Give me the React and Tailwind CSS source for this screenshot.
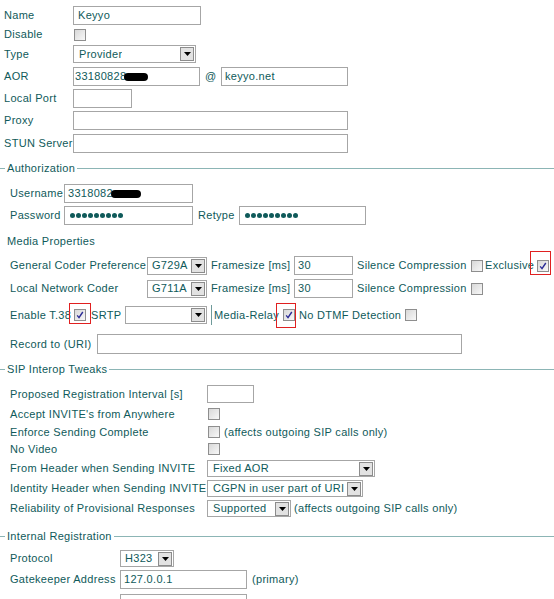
import React from 'react';

// colours taken from the old admin form
const TEXT = 'text-[#0f5a5a]';

const Box = ({ className = '', children }) => (
  <div className={`flex shrink-0 items-center overflow-hidden whitespace-nowrap border border-[#a6a6a6] bg-white ${className}`}>
    {children}
  </div>
);

const Arrow = () => (
  <span className="flex h-[14px] w-[14px] shrink-0 items-center justify-center border border-[#8c8c8c] bg-[#e2e2e2]">
    <svg width="7" height="4" viewBox="0 0 7 4">
      <path d="M0 0h7L3.5 4z" fill="#000" />
    </svg>
  </span>
);

const Select = ({ className = '', value = '' }) => (
  <div className={`flex shrink-0 items-center justify-between border border-[#a6a6a6] bg-white pl-[4px] pr-[1px] whitespace-nowrap ${className}`}>
    <span className="overflow-hidden">{value}</span>
    <Arrow />
  </div>
);

const Check = ({ checked = false, className = '', children }) => (
  <span className={`relative flex h-[12px] w-[12px] shrink-0 items-center justify-center border border-[#8e8e8e] bg-gradient-to-br from-[#d8d8d8] to-[#f8f8f8] ${className}`}>
    {checked && (
      <svg width="8" height="8" viewBox="0 0 8 8">
        <path d="M1.2 4.4L3 6.6L6.8 1" fill="none" stroke="#2b2b96" strokeWidth="1.4" />
      </svg>
    )}
    {children}
  </span>
);

const Redacted = ({ className = '' }) => (
  <span className={`inline-block h-[8px] rounded-full bg-black ${className}`} />
);

const Dots = () => (
  <span className="flex items-center gap-[1px]">
    {Array.from({ length: 9 }).map((_, i) => (
      <span key={i} className="h-[5px] w-[5px] rounded-full bg-[#0f5a5a]" />
    ))}
  </span>
);

const Legend = ({ title, className = '' }) => (
  <div className={`flex h-[14px] items-center ${className}`}>
    <span className="h-px w-[5px] bg-[#8cb5b5]" />
    <span className="px-[2px]">{title}</span>
    <span className="h-px flex-1 bg-[#8cb5b5]" />
  </div>
);

const App = () => {
  return (
    <div className={`h-[599px] w-[554px] overflow-hidden bg-white pt-[6px] font-['Liberation_Sans',Arial,sans-serif] text-[11px] tracking-[0.3px] ${TEXT}`}>
      {/* General */}
      <div className="pl-[4px]">
        <div className="flex h-[19px] items-center">
          <span className="w-[69px]">Name</span>
          <Box className="h-[19px] w-[128px] pl-[4px]">Keyyo</Box>
        </div>
        <div className="mt-[3px] flex h-[13px] items-center">
          <span className="w-[70px]">Disable</span>
          <Check />
        </div>
        <div className="mt-[4px] flex h-[18px] items-center">
          <span className="w-[69px]">Type</span>
          <Select className="h-[18px] w-[123px] pl-[5px]" value="Provider" />
        </div>
        <div className="mt-[4px] flex h-[19px] items-center">
          <span className="w-[69px]">AOR</span>
          <Box className="h-[19px] w-[127px] pl-[1px]">
            33180828
            <Redacted className="-ml-[2px] w-[24px]" />
          </Box>
          <span className="ml-[5px] w-[16px]">@</span>
          <Box className="h-[19px] w-[127px] pl-[3px]">keyyo.net</Box>
        </div>
        <div className="mt-[3px] flex h-[19px] items-center">
          <span className="w-[69px]">Local Port</span>
          <Box className="h-[19px] w-[59px]" />
        </div>
        <div className="mt-[3px] flex h-[19px] items-center">
          <span className="w-[69px]">Proxy</span>
          <Box className="h-[19px] w-[275px]" />
        </div>
        <div className="mt-[4px] flex h-[19px] items-center">
          <span className="w-[69px] whitespace-nowrap">STUN Server</span>
          <Box className="h-[19px] w-[275px]" />
        </div>
      </div>

      {/* Authorization */}
      <Legend title="Authorization" className="mt-[8px]" />
      <div className="pl-[10px]">
        <div className="mt-[9px] flex h-[19px] items-center">
          <span className="w-[54px]">Username</span>
          <Box className="h-[19px] w-[129px] pl-[3px]">
            3318082
            <Redacted className="-ml-[2px] w-[30px]" />
          </Box>
        </div>
        <div className="mt-[3px] flex h-[19px] items-center">
          <span className="w-[54px]">Password</span>
          <Box className="h-[19px] w-[129px] pl-[5px]">
            <Dots />
          </Box>
          <span className="ml-[5px] w-[41px]">Retype</span>
          <Box className="h-[19px] w-[127px] pl-[5px]">
            <Dots />
          </Box>
        </div>
      </div>

      {/* Media */}
      <div className="mt-[9px] flex h-[14px] items-center pl-[7px]">Media Properties</div>
      <div className="pl-[10px]">
        <div className="mt-[8px] flex h-[19px] items-center whitespace-nowrap">
          <span className="w-[137px]">General Coder Preference</span>
          <Select className="h-[18px] w-[60px] pl-[3px]" value="G729A" />
          <span className="ml-[4px] w-[83px]">Framesize [ms]</span>
          <Box className="h-[19px] w-[59px] pl-[3px]">30</Box>
          <span className="ml-[4px] w-[114px]">Silence Compression</span>
          <Check />
          <span className="ml-[2px] w-[52px]">Exclusive</span>
          <Check checked>
            <span className="absolute -left-[8px] -top-[10px] h-[24px] w-[21px] border border-[#e02020]" />
          </Check>
        </div>
        <div className="mt-[4px] flex h-[19px] items-center whitespace-nowrap">
          <span className="w-[137px]">Local Network Coder</span>
          <Select className="h-[18px] w-[60px] pl-[3px]" value="G711A" />
          <span className="ml-[4px] w-[83px]">Framesize [ms]</span>
          <Box className="h-[19px] w-[59px] pl-[3px]">30</Box>
          <span className="ml-[4px] w-[114px]">Silence Compression</span>
          <Check />
        </div>
        <div className="mt-[7px] flex h-[20px] items-center whitespace-nowrap">
          <span className="w-[64px]">Enable T.38</span>
          <Check checked>
            <span className="absolute -left-[6px] -top-[7px] h-[21px] w-[22px] border border-[#e02020]" />
          </Check>
          <span className="ml-[5px] w-[34px]">SRTP</span>
          <Select className="h-[18px] w-[82px]" value="" />
          <span className="ml-[4px] h-[20px] w-px bg-[#6f9a9a]" />
          <span className="ml-[2px] w-[69px]">Media-Relay</span>
          <Check checked>
            <span className="absolute -left-[8px] -top-[7px] h-[25px] w-[20px] border border-[#e02020]" />
          </Check>
          <span className="ml-[4px] w-[106px]">No DTMF Detection</span>
          <Check />
        </div>
        <div className="mt-[9px] flex h-[20px] items-center">
          <span className="w-[87px] whitespace-nowrap">Record to (URI)</span>
          <Box className="h-[20px] w-[365px]" />
        </div>
      </div>

      {/* SIP Interop Tweaks */}
      <Legend title="SIP Interop Tweaks" className="mt-[8px]" />
      <div className="pl-[10px] whitespace-nowrap">
        <div className="mt-[9px] flex h-[18px] items-center">
          <span className="w-[197px]">Proposed Registration Interval [s]</span>
          <Box className="h-[18px] w-[47px]" />
        </div>
        <div className="mt-[5px] flex h-[12px] items-center">
          <span className="w-[198px]">Accept INVITE's from Anywhere</span>
          <Check />
        </div>
        <div className="mt-[6px] flex h-[12px] items-center">
          <span className="w-[198px]">Enforce Sending Complete</span>
          <Check />
          <span className="ml-[4px]">(affects outgoing SIP calls only)</span>
        </div>
        <div className="mt-[5px] flex h-[12px] items-center">
          <span className="w-[198px]">No Video</span>
          <Check />
        </div>
        <div className="mt-[5px] flex h-[17px] items-center">
          <span className="w-[197px]">From Header when Sending INVITE</span>
          <Select className="h-[17px] w-[168px] pl-[5px]" value="Fixed AOR" />
        </div>
        <div className="mt-[3px] flex h-[17px] items-center">
          <span className="w-[197px]">Identity Header when Sending INVITE</span>
          <Select className="h-[17px] w-[156px] pl-[5px]" value="CGPN in user part of URI" />
        </div>
        <div className="mt-[3px] flex h-[17px] items-center">
          <span className="w-[197px]">Reliability of Provisional Responses</span>
          <Select className="h-[17px] w-[84px] pl-[5px]" value="Supported" />
          <span className="ml-[3px]">(affects outgoing SIP calls only)</span>
        </div>
      </div>

      {/* Internal Registration */}
      <Legend title="Internal Registration" className="mt-[12px]" />
      <div className="pl-[10px] whitespace-nowrap">
        <div className="mt-[7px] flex h-[17px] items-center">
          <span className="w-[110px]">Protocol</span>
          <Select className="h-[17px] w-[54px] pl-[4px]" value="H323" />
        </div>
        <div className="mt-[3px] flex h-[19px] items-center">
          <span className="w-[110px]">Gatekeeper Address</span>
          <Box className="h-[19px] w-[127px] pl-[3px]">127.0.0.1</Box>
          <span className="ml-[5px]">(primary)</span>
        </div>
        <div className="mt-[5px] flex h-[19px] items-center">
          <span className="w-[110px]">Gatekeeper Address</span>
          <Box className="h-[19px] w-[127px]" />
          <span className="ml-[5px]">(secondary)</span>
        </div>
      </div>
    </div>
  );
};

export default App;
